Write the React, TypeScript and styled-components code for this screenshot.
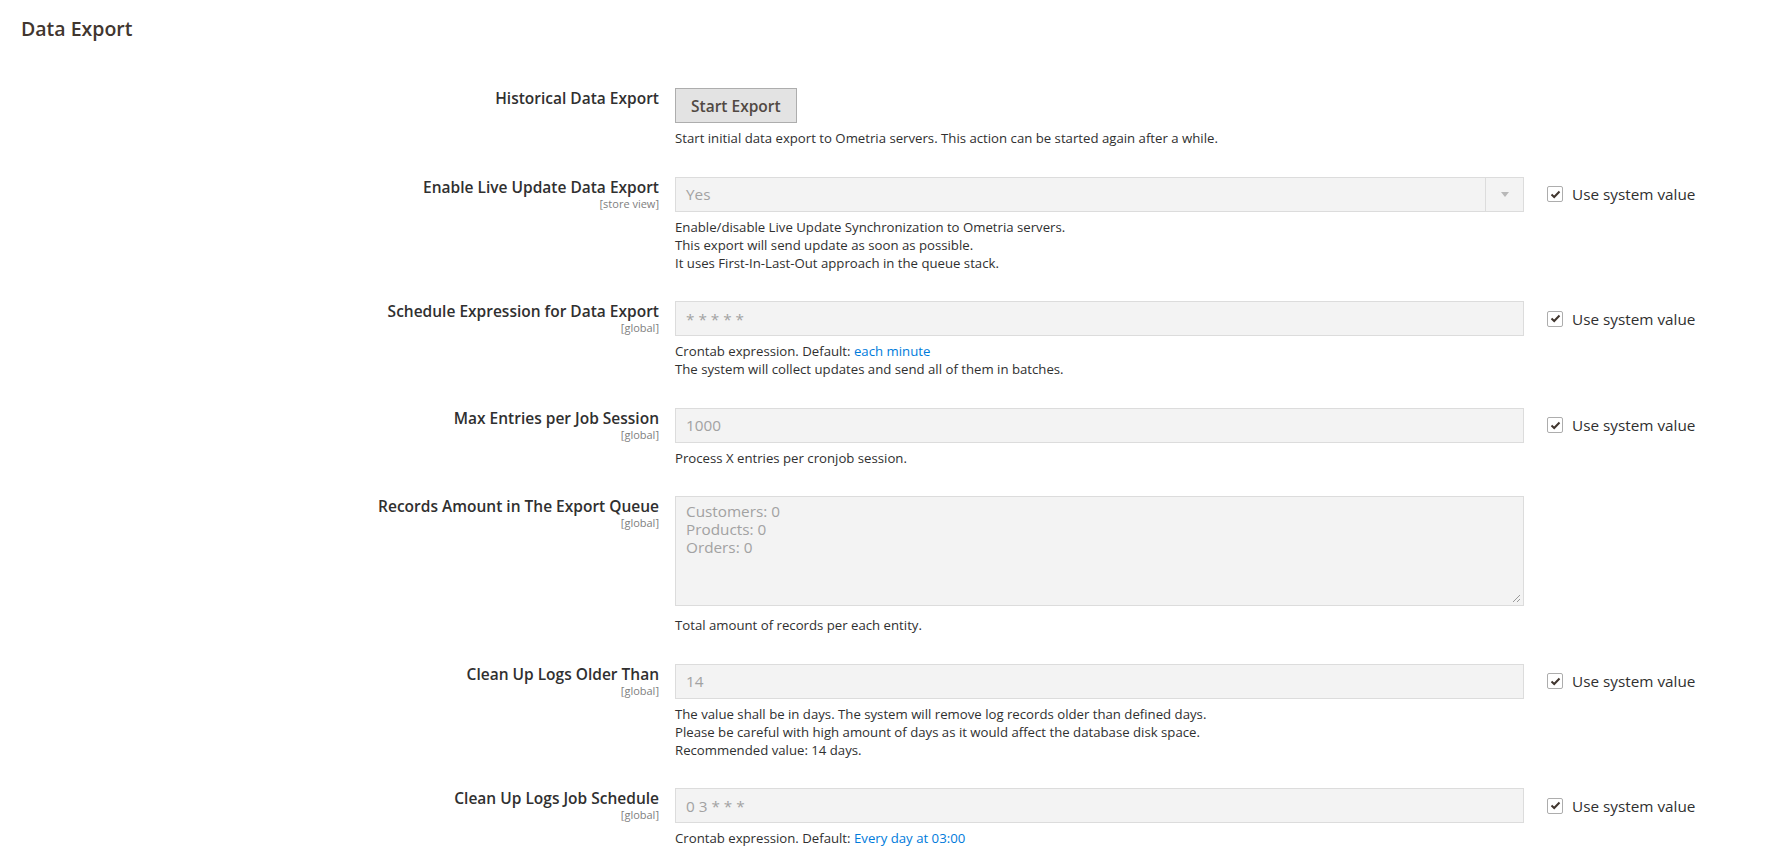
import React from "react";
import styled, { createGlobalStyle } from "styled-components";

const Global = createGlobalStyle`
  body { margin: 0; background: #fff; font-family: "Open Sans", "Liberation Sans", sans-serif; color: #303030; }
`;

const Page = styled.div`
  padding: 16px 0 0 21px;
`;
const Title = styled.h2`
  margin: 0 0 46px;
  font-size: 19.5px;
  font-weight: 600;
  color: #41362f;
  line-height: 26px;
`;
const Row = styled.div`
  display: grid;
  grid-template-columns: 638px 849px auto;
  column-gap: 16px;
  padding-bottom: 29.5px;
`;
const LabelCell = styled.div`
  text-align: right;
  padding-top: 0px;
`;
const LabelText = styled.div`
  font-size: 15.5px;
  font-weight: 600;
  line-height: 20px;
  color: #303030;
`;
const Scope = styled.div`
  font-size: 11px;
  line-height: 13px;
  color: #808080;
`;
const Control = styled.div`
  display: flex;
  flex-direction: column;
`;
const Button = styled.button`
  align-self: flex-start;
  height: 35px;
  padding: 0 15px;
  background: #e3e3e3;
  border: 1px solid #adadad;
  color: #514943;
  font-family: inherit;
  font-size: 15.5px;
  font-weight: 600;
`;
const Field = styled.div<{ $h?: number }>`
  height: ${(p) => p.$h ?? 35}px;
  box-sizing: border-box;
  background: #f3f3f3;
  border: 1px solid #dcdcdc;
  display: flex;
  align-items: ${(p) => (p.$h ? "flex-start" : "center")};
  position: relative;
  color: #a2a2a2;
  font-size: 15.3px;
`;
const FieldText = styled.div`
  flex: 1;
  padding: 0 10px;
  white-space: pre;
`;
const AreaText = styled.div`
  padding: 5px 10px;
  line-height: 18px;
`;
const Arrow = styled.div`
  width: 37px;
  align-self: stretch;
  border-left: 1px solid #dcdcdc;
  display: flex;
  align-items: center;
  justify-content: center;
  &::after {
    content: "";
    border-left: 4px solid transparent;
    border-right: 4px solid transparent;
    border-top: 5px solid #b8b8b8;
  }
`;
const Grip = styled.svg`
  position: absolute;
  right: 2px;
  bottom: 2px;
`;
const Note = styled.div<{ $mt?: number }>`
  margin-top: ${(p) => p.$mt ?? 6}px;
  font-size: 13.2px;
  line-height: 18px;
  color: #303030;
`;
const Link = styled.a`
  color: #007bdb;
  text-decoration: none;
`;
const SysCell = styled.label`
  display: flex;
  align-items: center;
  gap: 9px;
  height: 35px;
  padding-left: 7px;
  font-size: 15.3px;
  color: #303030;
`;
const Box = styled.span`
  width: 16px;
  height: 16px;
  box-sizing: border-box;
  border: 1px solid #adadad;
  border-radius: 2px;
  display: flex;
  align-items: center;
  justify-content: center;
  background: #fff;
`;

const Sys = () => (
  <SysCell>
    <Box>
      <svg width="11" height="9" viewBox="0 0 11 9">
        <path d="M1.5 4.5 L4.2 7 L9.5 1.5" fill="none" stroke="#41362f" strokeWidth="2" />
      </svg>
    </Box>
    Use system value
  </SysCell>
);

const Label = ({ t, s }: { t: string; s?: string }) => (
  <LabelCell>
    <LabelText>{t}</LabelText>
    {s && <Scope>{s}</Scope>}
  </LabelCell>
);

export default function App() {
  return (
    <Page>
      <Global />
      <Title>Data Export</Title>
      <Row>
        <Label t="Historical Data Export" />
        <Control>
          <Button>Start Export</Button>
          <Note $mt={6}>Start initial data export to Ometria servers. This action can be started again after a while.</Note>
        </Control>
        <div />
      </Row>
      <Row>
        <Label t="Enable Live Update Data Export" s="[store view]" />
        <Control>
          <Field>
            <FieldText>Yes</FieldText>
            <Arrow />
          </Field>
          <Note>
            Enable/disable Live Update Synchronization to Ometria servers.<br />
            This export will send update as soon as possible.<br />
            It uses First-In-Last-Out approach in the queue stack.
          </Note>
        </Control>
        <Sys />
      </Row>
      <Row>
        <Label t="Schedule Expression for Data Export" s="[global]" />
        <Control>
          <Field><FieldText>* * * * *</FieldText></Field>
          <Note>
            Crontab expression. Default: <Link>each minute</Link><br />
            The system will collect updates and send all of them in batches.
          </Note>
        </Control>
        <Sys />
      </Row>
      <Row>
        <Label t="Max Entries per Job Session" s="[global]" />
        <Control>
          <Field><FieldText>1000</FieldText></Field>
          <Note>Process X entries per cronjob session.</Note>
        </Control>
        <Sys />
      </Row>
      <Row>
        <Label t="Records Amount in The Export Queue" s="[global]" />
        <Control>
          <Field $h={110}>
            <AreaText>Customers: 0<br />Products: 0<br />Orders: 0</AreaText>
            <Grip width="9" height="9" viewBox="0 0 9 9">
              <path d="M8 1 L1 8 M8 5 L5 8" stroke="#999" strokeWidth="1" />
            </Grip>
          </Field>
          <Note $mt={10}>Total amount of records per each entity.</Note>
        </Control>
        <div />
      </Row>
      <Row>
        <Label t="Clean Up Logs Older Than" s="[global]" />
        <Control>
          <Field><FieldText>14</FieldText></Field>
          <Note>
            The value shall be in days. The system will remove log records older than defined days.<br />
            Please be careful with high amount of days as it would affect the database disk space.<br />
            Recommended value: 14 days.
          </Note>
        </Control>
        <Sys />
      </Row>
      <Row>
        <Label t="Clean Up Logs Job Schedule" s="[global]" />
        <Control>
          <Field><FieldText>0 3 * * *</FieldText></Field>
          <Note>
            Crontab expression. Default: <Link>Every day at 03:00</Link>
          </Note>
        </Control>
        <Sys />
      </Row>
    </Page>
  );
}
